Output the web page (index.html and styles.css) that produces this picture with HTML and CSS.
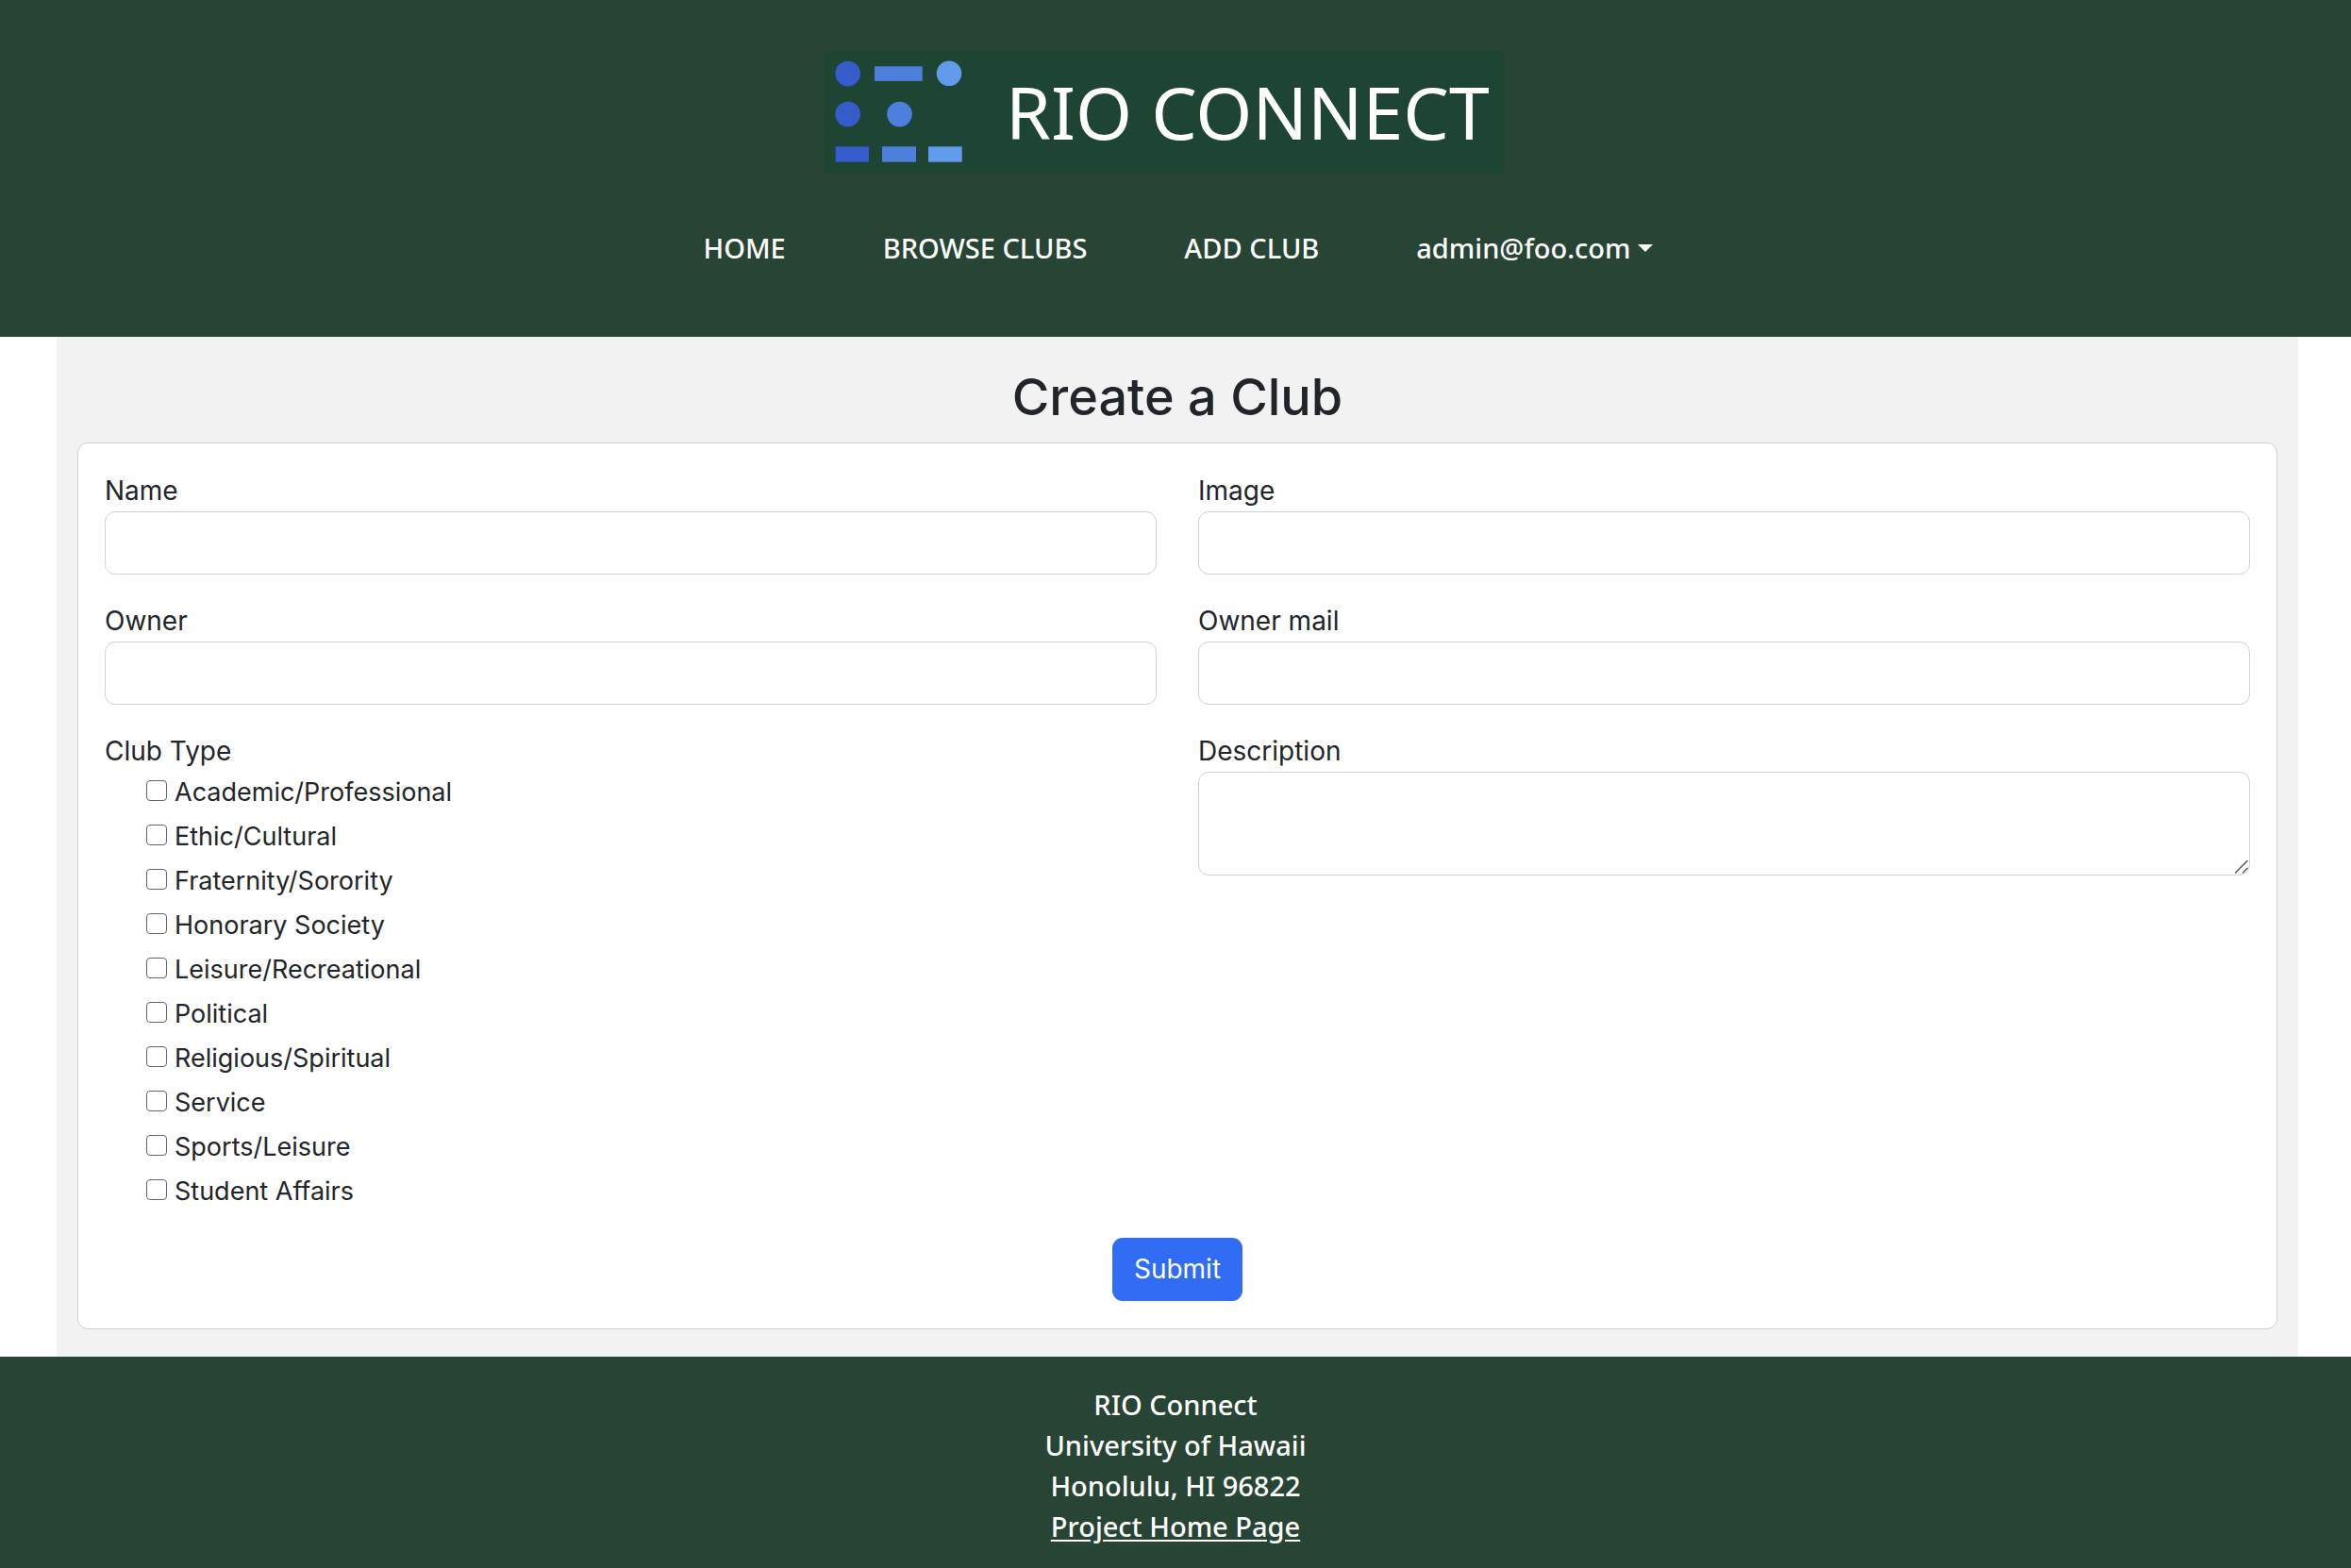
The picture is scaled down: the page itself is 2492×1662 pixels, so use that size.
FILE: index.html
```html
<!DOCTYPE html>
<html lang="en">
<head>
  <meta charset="utf-8">
  <meta name="viewport" content="width=device-width, initial-scale=1">
  <title>RIO Connect</title>
  <link rel="stylesheet" href="styles.css">
</head>
<body>
  <header class="site-header">
    <a class="brand" href="#">
      <svg class="brand-mark" viewBox="0 0 158 130" width="158" height="130" aria-hidden="true">
        <g fill="#365ccc">
          <circle cx="24.7" cy="24" r="13.3"/>
          <circle cx="24.7" cy="67" r="13.3"/>
          <rect x="11.7" y="101.3" width="35.3" height="16.4"/>
        </g>
        <g fill="#4d80dc">
          <rect x="53" y="16.3" width="50.7" height="15.6"/>
          <circle cx="79.5" cy="67" r="13.3"/>
          <rect x="61" y="101.3" width="36" height="16.4"/>
        </g>
        <g fill="#609bec">
          <circle cx="132" cy="23.8" r="13.3"/>
          <rect x="110" y="101.3" width="35.7" height="16.4"/>
        </g>
      </svg>
      <span class="brand-name">RIO CONNECT</span>
    </a>
    <nav class="main-nav">
      <a class="nav-link" href="#">HOME</a>
      <a class="nav-link" href="#">BROWSE CLUBS</a>
      <a class="nav-link" href="#">ADD CLUB</a>
      <button class="nav-link nav-menu" type="button" aria-haspopup="true">admin@foo.com<span class="caret"></span></button>
    </nav>
  </header>

  <main class="page">
    <h2 class="page-title">Create a Club</h2>
    <form class="card">
      <div class="fields">
        <div class="field">
          <label for="name">Name</label>
          <input class="control" id="name" type="text">
        </div>
        <div class="field">
          <label for="image">Image</label>
          <input class="control" id="image" type="text">
        </div>
        <div class="field">
          <label for="owner">Owner</label>
          <input class="control" id="owner" type="text">
        </div>
        <div class="field">
          <label for="mail">Owner mail</label>
          <input class="control" id="mail" type="text">
        </div>
        <fieldset class="field types">
          <legend>Club Type</legend>
          <label class="option"><input type="checkbox">Academic/Professional</label>
          <label class="option"><input type="checkbox">Ethic/Cultural</label>
          <label class="option"><input type="checkbox">Fraternity/Sorority</label>
          <label class="option"><input type="checkbox">Honorary Society</label>
          <label class="option"><input type="checkbox">Leisure/Recreational</label>
          <label class="option"><input type="checkbox">Political</label>
          <label class="option"><input type="checkbox">Religious/Spiritual</label>
          <label class="option"><input type="checkbox">Service</label>
          <label class="option"><input type="checkbox">Sports/Leisure</label>
          <label class="option"><input type="checkbox">Student Affairs</label>
        </fieldset>
        <div class="field">
          <label for="description">Description</label>
          <textarea class="control control-area" id="description"></textarea>
        </div>
      </div>
      <button class="submit" type="submit">Submit</button>
    </form>
  </main>

  <footer class="site-footer">
    <div>RIO Connect</div>
    <div>University of Hawaii</div>
    <div>Honolulu, HI 96822</div>
    <a href="#">Project Home Page</a>
  </footer>
</body>
</html>
```
FILE: styles.css
```css
* {
  box-sizing: border-box;
}

body {
  margin: 0;
  background: #fff;
  color: #212529;
  font: 28px/43px Inter, sans-serif;
}

/* Header */
.site-header {
  display: flex;
  flex-direction: column;
  align-items: center;
  gap: 57px;
  padding: 54px 24px 72px;
  background: #284435;
  color: #fff;
  font-family: "Noto Sans", sans-serif;
}

.brand {
  display: flex;
  align-items: center;
  gap: 34px;
  width: 720px;
  max-width: 100%;
  margin-right: 24px;
  background: #1e4533;
  color: #fff;
  text-decoration: none;
}

.brand-mark {
  flex: none;
}

.brand-name {
  font-size: 77px;
  line-height: 130px;
  white-space: nowrap;
}

.main-nav {
  display: flex;
  flex-wrap: wrap;
  justify-content: center;
  gap: 0 103px;
  padding-left: 6px;
}

.nav-link {
  padding: 0;
  border: 0;
  background: none;
  color: #fff;
  font: 500 29px/44px "Noto Sans", sans-serif;
  text-decoration: none;
}

.nav-menu {
  display: flex;
  align-items: center;
  gap: 8px;
}

.caret {
  border: 8px solid transparent;
  border-top-color: #fff;
  border-bottom: 0;
}

/* Form */
.page {
  margin: 0 56px 0 60px;
  padding: 29px 22px;
  background: #f2f2f2;
}

.page-title {
  margin: 0 0 13px;
  font-size: 54px;
  font-weight: 500;
  line-height: 70px;
  text-align: center;
}

.card {
  display: flex;
  flex-direction: column;
  align-items: center;
  gap: 28px;
  padding: 29px 28px;
  border: 1px solid #cfd1d3;
  border-radius: 11px;
  background: #fff;
}

.fields {
  display: grid;
  grid-template-columns: 1fr 1fr;
  gap: 28px 44px;
  width: 100%;
}

.field {
  display: flex;
  flex-direction: column;
  min-width: 0;
}

.control {
  width: 100%;
  height: 67px;
  padding: 10px 21px;
  border: 1px solid #ced4da;
  border-radius: 11px;
  background: #fff;
  color: inherit;
  font: inherit;
}

.control-area {
  height: 110px;
  resize: vertical;
}

.control-area::-webkit-resizer {
  background: url("data:image/svg+xml,%3Csvg xmlns='http://www.w3.org/2000/svg' width='15' height='15'%3E%3Cpath d='M0 13.5L13.5 0M8 13.5L13.5 8' stroke='%23555' stroke-width='1.5'/%3E%3C/svg%3E") no-repeat;
}

.types {
  gap: 4px;
  margin: 0;
  padding: 0;
  border: 0;
}

.types legend {
  padding: 0;
}

.option {
  display: flex;
  align-items: center;
  gap: 8px;
  padding-left: 44px;
  font-size: 27px;
}

.option input {
  appearance: none;
  width: 22px;
  height: 22px;
  margin: 0 0 4px;
  border: 1px solid #666;
  border-radius: 4px;
  background: #fff;
}

.submit {
  padding: 12px 23px;
  border: 0;
  border-radius: 11px;
  background: #316cf4;
  color: #fff;
  font: inherit;
}

/* Footer */
.site-footer {
  padding: 29px 24px 23px;
  background: #284435;
  color: #fff;
  font-family: "Noto Sans", sans-serif;
  font-size: 29px;
  font-weight: 500;
  text-align: center;
}

.site-footer a {
  color: inherit;
  text-underline-offset: 3px;
}
```
